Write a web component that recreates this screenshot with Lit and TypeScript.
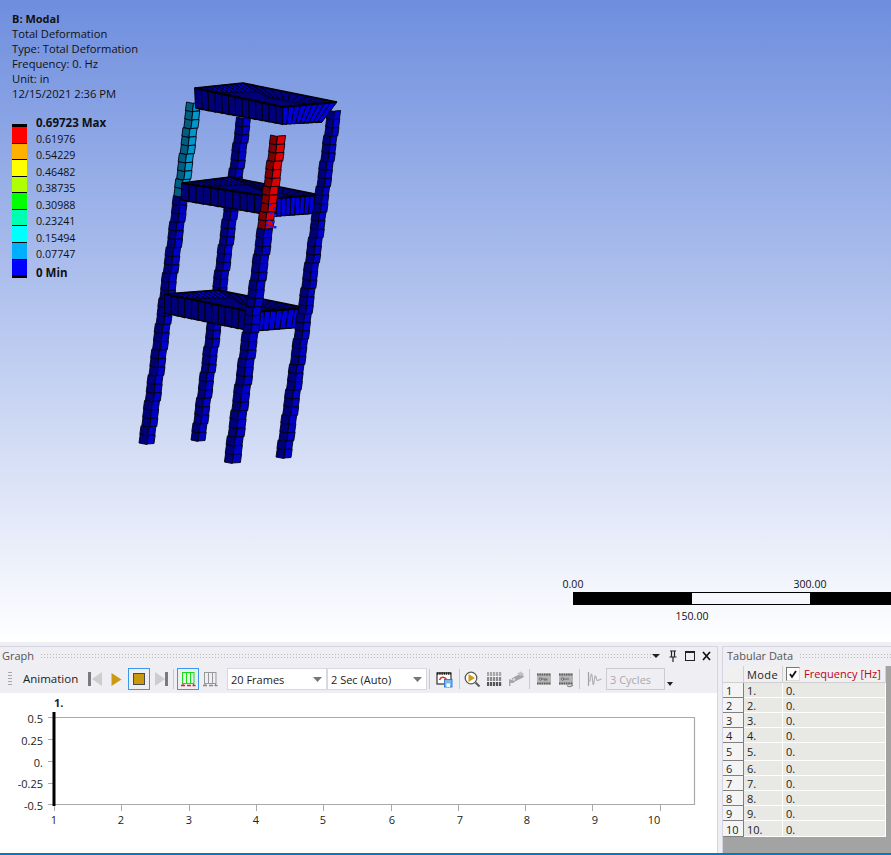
import { LitElement, html, css, svg } from "lit";
import { customElement } from "lit/decorators.js";

type P = [number, number];
const lerp = (a: P, b: P, t: number): P => [a[0] + (b[0] - a[0]) * t, a[1] + (b[1] - a[1]) * t];
const pts = (l: P[]) => l.map((p) => `${p[0].toFixed(1)},${p[1].toFixed(1)}`).join(" ");

function face(a: P, b: P, c: P, d: P, cols: number, rows: number, fill: string, sw = 1) {
  const out: unknown[] = [];
  for (let r = 0; r < rows; r++) {
    for (let q = 0; q < cols; q++) {
      const jit = ((r * 7 + q * 3) % 3 - 1) * 0.4;
      const t0 = lerp(a, b, q / cols), t1 = lerp(a, b, (q + 1) / cols);
      const b0 = lerp(d, c, q / cols), b1 = lerp(d, c, (q + 1) / cols);
      const p0 = lerp(t0, b0, r / rows), p1 = lerp(t1, b1, r / rows);
      const p2 = lerp(t1, b1, (r + 1) / rows), p3 = lerp(t0, b0, (r + 1) / rows);
      out.push(svg`<polygon points=${pts([[p0[0] + jit, p0[1]], [p1[0] + jit, p1[1] + 0.5], [p2[0] + jit, p2[1] + 0.5], [p3[0] + jit, p3[1]]])} fill=${fill} stroke="#000010" stroke-width=${sw}></polygon>`);
    }
  }
  return out;
}

interface Leg { top: [number, number, number, number]; bot: [number, number, number, number]; n: number; hot?: number; dark?: string; bright?: string; }
function leg(l: Leg) {
  const [a, b, c, y0] = l.top, [d, e, f, y1] = l.bot;
  const mk = (t0: number, t1: number, n: number, dark: string, bright: string) => {
    const at = (x0: number, x1: number, t: number) => x0 + (x1 - x0) * t;
    const yy = (t: number) => at(y0, y1, t);
    return [
      face([at(a, d, t0), yy(t0)], [at(b, e, t0), yy(t0) + 1], [at(b, e, t1), yy(t1) + 1], [at(a, d, t1), yy(t1)], 1, n, dark, 0.9),
      face([at(b, e, t0), yy(t0) + 1], [at(c, f, t0), yy(t0)], [at(c, f, t1), yy(t1)], [at(b, e, t1), yy(t1) + 1], 1, n, bright, 0.9),
    ];
  };
  if (l.hot) {
    const hn = Math.round(l.n * l.hot);
    return [mk(0, l.hot, hn, l.dark!, l.bright!), mk(l.hot, 1, l.n - hn, NAVY, BLUE)];
  }
  return mk(0, 1, l.n, NAVY, BLUE);
}

const NAVY = "#000078";
const BLUE = "#0000c8";

function platform(left: P, back: P, right: P, front: P, lb: P, fb: P, rb: P) {
  return [
    svg`<polygon points=${pts([left, back, right, front])} fill=${NAVY}></polygon>`,
    face(lerp(left, back, 0.2), back, lerp(back, front, 0.35), lerp(left, front, 0.25), 9, 1, "#0000d0", 0.8),
    face(back, right, lerp(right, front, 0.5), lerp(back, front, 0.6), 10, 1, NAVY, 0.8),
    svg`<polyline points=${pts([left, back, right])} fill="none" stroke="#000" stroke-width="1.6"></polyline>`,
    face(front, right, rb, fb, 9, 1, "#0000d8", 1),
    face(left, front, fb, lb, 13, 1, NAVY, 1.1),
    svg`<polyline points=${pts([left, front, right])} fill="none" stroke="#000" stroke-width="2.2"></polyline>`,
    svg`<polyline points=${pts([lb, fb, rb])} fill="none" stroke="#000" stroke-width="1.2"></polyline>`,
  ];
}

const speckle: P[] = [[269, 203], [273, 207], [270, 212], [274, 214], [268, 219], [272, 221], [270, 225], [274, 226], [266, 224]];

function model() {
  return svg`
    ${leg({ top: [237, 244, 251, 117], bot: [191, 198, 205, 440], n: 38 })}
    ${leg({ top: [187, 194, 201, 102], bot: [139, 147, 154, 443], n: 40, hot: 0.275, dark: "#005f7e", bright: "#0098ca" })}
    ${platform([182, 183], [230, 177], [320, 195], [277, 198], [182, 200], [277, 216], [318, 213])}
    ${platform([165, 294], [218, 290], [307, 308], [253, 312], [165, 313], [252, 331], [303, 327])}
    ${leg({ top: [271, 278, 286, 135], bot: [224, 232, 240, 462], n: 38, hot: 0.285, dark: "#7c0000", bright: "#dc0000" })}
    ${leg({ top: [328, 335, 341, 110], bot: [276, 284, 291, 457], n: 41 })}
    ${platform([195, 88], [243, 83], [337, 102], [283, 107], [196, 108], [283, 124], [322, 122])}
    ${speckle.map((p) => svg`<rect x=${p[0]} y=${p[1]} width="2.4" height="2.4" fill="#1a1ae0"></rect>`)}
  `;
}

const legend = [
  ["#ff0000", "0.61976"], ["#ffb000", "0.54229"], ["#ffff00", "0.46482"], ["#b0ff00", "0.38735"], ["#00ff00", "0.30988"],
  ["#00ffb0", "0.23241"], ["#00ffff", "0.15494"], ["#00b0ff", "0.07747"], ["#0000ff", ""],
];

const rows = [1, 2, 3, 4, 5, 6, 7, 8, 9, 10].map((n) => ({ n, h: n === 5 ? 18 : n === 10 ? 16 : 15 }));

const I = (body: unknown) => html`<svg class="ic" viewBox="0 0 22 22" width="22" height="22">${body}</svg>`;

const brickRow = (y: number, c: string) => [0, 1, 2, 3, 4].map((i) => svg`<rect x=${4 + i * 3} y=${y} width="2.200" height="4" fill=${c}></rect>`);

const ICON = {
  prev: svg`<rect x="4" y="4" width="3" height="14" fill="#7a7a7a"></rect><path d="M18 4v14l-10-7z" fill="#cdcdcd"></path>`,
  play: svg`<path d="M5.500 5v13l10-6.500z" fill="#cc9a12"></path>`,
  stop: svg`<rect x="5.500" y="5.500" width="11" height="11" fill="#c8980e" stroke="#4a4a4a" stroke-width="1"></rect>`,
  next: svg`<path d="M5 4v14l10-7z" fill="#cdcdcd"></path><rect x="15" y="4" width="3" height="14" fill="#7a7a7a"></rect>`,
  bars: (c: string, e: string) => svg`<rect x="5.500" y="4.500" width="11.500" height="11" fill="none" stroke=${c} stroke-width="1"></rect><path d="M9.500 4v12M13.500 4v12" stroke=${c} stroke-width="1" fill="none"></path><path d="M4 17.500h4M10 17.500h4M15.500 17.500h3" stroke=${e} stroke-width="1.500"></path><path d="M6 16v2M16.500 16v2" stroke=${e} stroke-width="1"></path>`,
  film: svg`<rect x="4" y="5" width="14" height="11" fill="#fff" stroke="#333" stroke-width="1.200"></rect><path d="M4 5.500h14" stroke="#222" stroke-width="2.400" stroke-dasharray="1.500 .7"></path><path d="M6.500 12c1.500-3.500 5-3.500 7 -.5" stroke="#d03038" stroke-width="1.600" fill="none"></path><rect x="11.500" y="11.500" width="7.500" height="7.500" fill="#78b8f0" stroke="#2a78c8" stroke-width=".9"></rect><rect x="13.500" y="15.500" width="3.500" height="3.500" fill="#fff"></rect>`,
  search: svg`<circle cx="10" cy="10" r="5.800" fill="#fff" stroke="#5a5a5a" stroke-width="1.300"></circle><path d="M7.500 6v8l6.500-4z" fill="#d09c10"></path><path d="M14.500 14.500l4 4" stroke="#5a5a5a" stroke-width="2"></path>`,
  grid: svg`${brickRow(4, "#a8a8a8")}${brickRow(9, "#8a8a8a")}${brickRow(14, "#555555")}`,
  camera: svg`<path d="M6.500 10.500l10-5.500 2.500 4-10 5z" fill="#a4a4a4"></path><path d="M12 5.500l4-2 3 3-3 1.500z" fill="#c4c4c4"></path><path d="M4 11v7h1.500v-3h3l1.500-2" fill="#a8a8a8"></path><circle cx="9" cy="11.500" r="1.200" fill="#ddd"></circle>`,
  reel: svg`<rect x="4" y="5.500" width="14" height="11" fill="#b4b4b4"></rect><path d="M4 6.500h14M4 15.500h14" stroke="#5e5e5e" stroke-width="2" stroke-dasharray="1.600 .7"></path><path d="M8 11h6M12 11v2M14 11v1.500" stroke="#666" stroke-width="1"></path><circle cx="7.500" cy="11" r="1.300" fill="none" stroke="#666" stroke-width=".8"></circle>`,
  reel2: svg`<rect x="4" y="5.500" width="14" height="11" fill="#b4b4b4"></rect><path d="M4 6.500h14M4 15.500h14" stroke="#5e5e5e" stroke-width="2" stroke-dasharray="1.600 .7"></path><path d="M8 11h6" stroke="#666" stroke-width="1"></path><circle cx="7.500" cy="11" r="1.300" fill="none" stroke="#666" stroke-width=".8"></circle><path d="M12 17.500c2 1.500 4.500 1 6-.5" stroke="#8a8a8a" stroke-width="1.300" fill="none"></path>`,
  wave: svg`<path d="M5.500 4v14" stroke="#a0a0a0" stroke-width="1.200"></path><path d="M5.500 13h1.500c1-9 2-9 2.500-1s1.500 4 2-1 1.500-3 2 0 1.500 1 5 0" fill="none" stroke="#b0b0b0" stroke-width="1.100"></path>`,
};

const xLabels = [54, 121, 189, 256, 323, 392, 460, 527, 595, 654];
const yTicks: [number, string, number][] = [[24, "0.5", 26], [46, "0.25", 48], [68, "0.", 70], [90, "-0.25", 91], [111, "-0.5", 113]];

@customElement("app-root")
export class AppRoot extends LitElement {
  static styles = css`
    :host { display: block; width: 891px; height: 855px; overflow: hidden; font-family: "Open Sans", "Noto Sans", sans-serif; font-size: 11px; color: #111; }
    .viewport { position: relative; height: 642px; overflow: hidden; background: linear-gradient(#6e8ede, #ffffff); padding: 11px 0 0 12px; box-sizing: border-box; }
    .model { position: absolute; left: 0; top: 0; }
    .info { position: relative; line-height: 15px; font-size: 11.200px; }
    .info b { display: block; font-weight: 700; font-size: 11px; }
    .legend { position: relative; display: flex; margin-top: 22px; }
    .bar { width: 15px; border-top: 3px solid #000; border-bottom: 3px solid #000; display: flex; flex-direction: column; height: 148px; margin-top: 1px; }
    .bar i { flex: 1; border-bottom: 1px solid #000; box-sizing: border-box; }
    .bar i:last-child { border-bottom: 0; }
    .labels { margin-left: 9px; display: flex; flex-direction: column; margin-top: -9px; font-size: 10.700px; }
    .labels span { height: 16.550px; line-height: 17px; }
    .labels b { font-weight: 700; height: 16.550px; line-height: 17px; font-size: 11.500px; }
    .labels b:last-child { margin-top: 1px; }
    .scale { position: absolute; left: 573px; top: 577px; width: 318px; height: 48px; font-size: 10.500px; }
    .scale .t { position: absolute; transform: translateX(-50%); line-height: 15px; }
    .scalebar { position: absolute; left: 0; top: 15px; width: 318px; height: 13px; background: #000; }
    .scalebar i { position: absolute; left: 119px; width: 118px; top: 1px; bottom: 1px; background: #f5f7fd; }
    .panels { display: flex; height: 213px; background: #eeeef3; padding-top: 4px; box-sizing: border-box; border-bottom: 2px solid #007acc; }
    .graph { width: 718px; display: flex; flex-direction: column; border-top: 1px solid #d4d4e4; border-right: 1px solid #d4d4e4; box-sizing: border-box; }
    .title { height: 20px; padding-bottom: 3px; box-sizing: border-box; display: flex; align-items: center; color: #555; font-size: 11px; padding-left: 2px; flex: none; }
    .title .grip { flex: 1; height: 5px; margin-left: 6px; background-image: radial-gradient(#b8b8b8 0.700px, transparent 0.900px); background-size: 3px 3px; }
    .title svg { display: block; flex: none; }
    .toolbar { height: 26px; display: flex; align-items: flex-start; padding: 1px 0 0 8px; box-sizing: border-box; flex: none; }
    .tgrip { width: 4px; height: 16px; margin-top: 3px; background-image: radial-gradient(#a8a8a8 0.600px, transparent 0.800px); background-size: 2px 3px; }
    .alabel { margin-left: 11px; width: 61px; color: #222; font-size: 11.500px; line-height: 22px; }
    .btn { width: 22px; height: 22px; box-sizing: border-box; flex: none; position: relative; }
    .btn.on { outline: 1px solid #3a96ee; outline-offset: -1px; }
    .ic { display: block; }
    .sep { width: 1px; height: 20px; margin-top: 1px; background: #c8c8d0; flex: none; margin-left: 2px; margin-right: 3px; }
    .sep.a { margin-left: 1px; }
    .sep.b { margin-left: 4px; margin-right: 1px; }
    .combo { width: 100px; height: 22px; box-sizing: border-box; background: #fff; border: 1px solid #d8d8e4; display: flex; align-items: center; padding: 0 4px 0 3px; color: #222; flex: none; font-size: 11px; justify-content: space-between; }
    .combo.first { margin-left: 6px; }
    .combo svg { display: block; }
    .combo.off { width: 59px; margin-left: 1px; background: #eeeef3; color: #aaa; border-color: #ccc; }
    .caret { margin-left: 2px; margin-top: 14px; display: block; }
    .chart { flex: 1; background: #fff; display: block; min-height: 0; }
    .chart svg { display: block; }
    .chart text { font-family: "Open Sans", "Noto Sans", sans-serif; font-size: 11px; fill: #222; }
    .chart text.bold { font-weight: 700; }
    .tab { flex: 1; margin-left: 4px; display: flex; flex-direction: column; border-top: 1px solid #d4d4e4; border-left: 1px solid #d4d4e4; min-width: 0; }
    .tab .title { padding-left: 4px; height: 19px; padding-bottom: 2px; }
    .tablewrap { flex: 1; background: #a3a3a3; min-height: 0; }
    .table { width: 163px; display: grid; grid-template-columns: 21px 39px 103px; background: #e8e8e4; }
    .c { box-sizing: border-box; border-right: 1px solid #fff; border-bottom: 1px solid #fff; padding-left: 3px; padding-top: 1px; line-height: 13px; color: #222; display: flex; align-items: center; }
    .c.tall { padding-top: 0; }
    .hd { height: 17px; padding-top: 0; padding-bottom: 2px; background: #f0f0f0; border-right: 1px solid #d0d0d0; border-bottom: 1px solid #d0d0d0; }
    .hd.mode { padding-left: 3px; letter-spacing: .4px; padding-bottom: 0; }
    .hd.freq { color: #c00020; padding-left: 3px; gap: 4px; }
    .box { width: 14px; height: 14px; background: #fff; border: 1px solid #777; border-right-color: #ddd; border-bottom-color: #ddd; box-sizing: border-box; display: block; flex: none; margin-top: 2px; }
    .box svg { display: block; }
    .idx { background: #f4f4f4; border-right: 1px solid #808080; border-bottom: 1px solid #808080; }
  `;

  render() {
    return html`
      <div class="viewport">
        <svg class="model" width="891" height="642" viewBox="0 0 891 642">${model()}</svg>
        <div class="info">
          <b>B: Modal</b>
          <div>Total Deformation</div>
          <div>Type: Total Deformation</div>
          <div>Frequency: 0. Hz</div>
          <div>Unit: in</div>
          <div>12/15/2021 2:36 PM</div>
        </div>
        <div class="legend">
          <div class="bar">${legend.map((l) => html`<i style="background:${l[0]}"></i>`)}</div>
          <div class="labels">
            <b>0.69723 Max</b>
            ${legend.slice(0, 8).map((l) => html`<span>${l[1]}</span>`)}
            <b>0 Min</b>
          </div>
        </div>
        <div class="scale">
          <span class="t" style="left:0;top:0">0.00</span>
          <span class="t" style="left:237px;top:0">300.00</span>
          <div class="scalebar"><i></i></div>
          <span class="t" style="left:119px;top:32px">150.00</span>
        </div>
      </div>
      <div class="panels">
        <div class="graph">
          <div class="title">
            <span>Graph</span><span class="grip"></span>
            <svg width="66" height="14" viewBox="0 0 66 14">
              <path d="M1 5h8l-4 4z" fill="#222"></path>
              <path d="M19 2h6M20.500 2v6M23.500 2v6M18.500 8h7M22 8v5" stroke="#222" stroke-width="1.200" fill="none"></path>
              <rect x="34.500" y="2.500" width="9" height="9" fill="none" stroke="#222" stroke-width="1"></rect><path d="M34 3h10" stroke="#222" stroke-width="2"></path>
              <path d="M52 3l7 8M59 3l-7 8" stroke="#111" stroke-width="1.700"></path>
            </svg>
          </div>
          <div class="toolbar">
            <span class="tgrip"></span>
            <span class="alabel">Animation</span>
            <span class="btn">${I(ICON.prev)}</span>
            <span class="btn">${I(ICON.play)}</span>
            <span class="btn on">${I(ICON.stop)}</span>
            <span class="btn">${I(ICON.next)}</span>
            <span class="sep a"></span>
            <span class="btn on">${I(ICON.bars("#10e010", "#e02020"))}</span>
            <span class="btn">${I(ICON.bars("#999", "#888"))}</span>
            <span class="combo first">20 Frames <svg width="9" height="5" viewBox="0 0 9 5"><path d="M0 0h9L4.500 5z" fill="#777"></path></svg></span>
            <span class="combo">2 Sec (Auto) <svg width="9" height="5" viewBox="0 0 9 5"><path d="M0 0h9L4.500 5z" fill="#777"></path></svg></span>
            <span class="sep"></span>
            <span class="btn">${I(ICON.film)}</span>
            <span class="sep b"></span>
            <span class="btn">${I(ICON.search)}</span>
            <span class="btn">${I(ICON.grid)}</span>
            <span class="btn">${I(ICON.camera)}</span>
            <span class="sep"></span>
            <span class="btn">${I(ICON.reel)}</span>
            <span class="btn">${I(ICON.reel2)}</span>
            <span class="sep"></span>
            <span class="btn">${I(ICON.wave)}</span>
            <span class="combo off">3 Cycles</span>
            <svg class="caret" width="6" height="4" viewBox="0 0 6 4"><path d="M0 0h6L3 4z" fill="#222"></path></svg>
          </div>
          <div class="chart">
            <svg width="717" height="160" viewBox="0 0 717 160">
              <path d="M54.500 24.500H694.500V111.500H54.500" fill="none" stroke="#aaa" stroke-width="1.200"></path>
              ${yTicks.map((t) => svg`<path d=${`M48 ${t[0] + 0.5}h6`} stroke="#aaa"></path><text x="43" y=${t[2] + 4} text-anchor="end">${t[1]}</text>`)}
              ${xLabels.map((x, i) => svg`<path d=${`M${Math.round(54 + 67.3 * i) + 0.5} 112v6`} stroke="#aaa"></path><text x=${x} y="131" text-anchor="middle">${i + 1}</text>`)}
              <rect x="52.500" y="19" width="3" height="94" fill="#000"></rect>
              <text class="bold" x="54" y="14">1.</text>
            </svg>
          </div>
        </div>
        <div class="tab">
          <div class="title"><span>Tabular Data</span><span class="grip"></span></div>
          <div class="tablewrap">
            <div class="table">
              <div class="c hd"></div>
              <div class="c hd mode">Mode</div>
              <div class="c hd freq"><span class="box"><svg width="12" height="12" viewBox="0 0 12 12"><path d="M3 6l2 3 4-6" fill="none" stroke="#111" stroke-width="1.800"></path></svg></span>Frequency [Hz]</div>
              ${rows.map((r) => html`
                <div class="c idx ${r.h === 18 ? "tall" : ""}" style="height:${r.h}px">${r.n}</div>
                <div class="c ${r.h === 18 ? "tall" : ""}" style="height:${r.h}px">${r.n}.</div>
                <div class="c ${r.h === 18 ? "tall" : ""}" style="height:${r.h}px">0.</div>`)}
            </div>
          </div>
        </div>
      </div>
    `;
  }
}
